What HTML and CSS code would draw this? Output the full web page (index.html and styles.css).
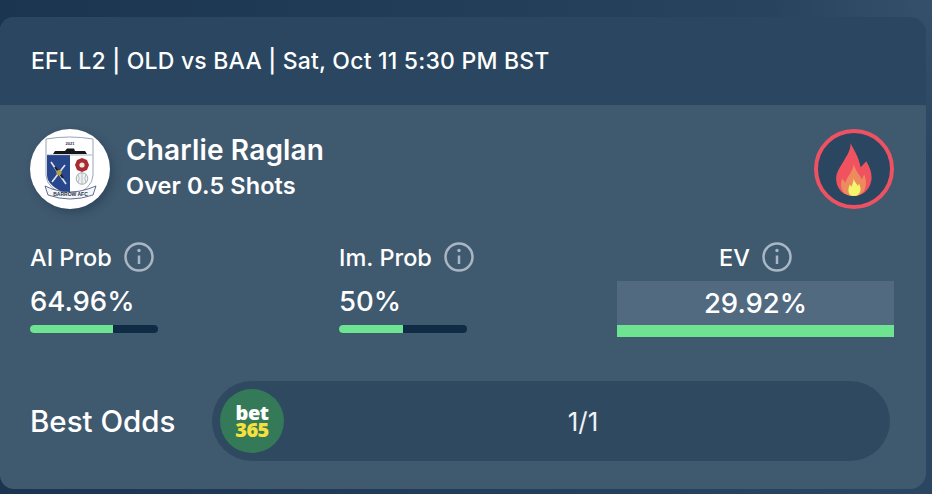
FILE: index.html
```html
<!DOCTYPE html>
<html lang="en">
<head>
<meta charset="utf-8">
<title>Best Odds</title>
<link rel="stylesheet" href="styles.css">
</head>
<body>
<main class="card">
  <header class="card-head">EFL L2 | OLD vs BAA | Sat, Oct 11 5:30 PM BST</header>
  <div class="card-body">
    <section class="player">
      <div class="crest">
        <svg viewBox="0 0 80 80" width="80" height="80">
          <circle cx="40" cy="40" r="40" fill="#fff"/>
          <path d="M16 10 Q40 6 63 10 L63 46 Q63 60 40 68 Q16 60 16 46 Z" fill="#fff" stroke="#98a4b6" stroke-width="1"/>
          <path d="M17 26 H40 V66 Q17 58 17 46 Z" fill="#27468c"/>
          <path d="M23 25 L25 22 H35 L37 19.500 H44 L45 22 H55 L57 25 Z" fill="#15161a"/>
          <path d="M17 26 H62" stroke="#707c90" stroke-width=".6"/>
          <path d="M21 33 L36 55" stroke="#dfe4ea" stroke-width="1.600"/>
          <path d="M35 36 L22 53" stroke="#dfe4ea" stroke-width="1.600"/>
          <path d="M25 38 L33 49" stroke="#1a1c20" stroke-width="2"/>
          <circle cx="29" cy="43.500" r="2.600" fill="#b9a23c"/>
          <path d="M52 29 L57 31 L59 36 L57 41 L52 43 L47 41 L45 36 L47 31 Z" fill="#a82a34"/>
          <circle cx="52" cy="36" r="2.600" fill="#f3e6da"/>
          <circle cx="52" cy="49.500" r="5.800" fill="#eef1f2" stroke="#7f8c90" stroke-width=".7"/>
          <path d="M52 44 V55 M48 45.500 Q50.500 49.500 48 53.500 M56 45.500 Q53.500 49.500 56 53.500" stroke="#7f8c90" stroke-width=".5" fill="none"/>
          <path d="M15 57 L22 60 Q40 66 58 60 L66 57 L63 66 Q40 74 18 66 Z" fill="#f4f6f8" stroke="#3a4a78" stroke-width=".8"/>
          <text x="40.500" y="67" class="crest-text">BARROW AFC</text>
          <text x="40" y="15.500" class="crest-text crest-year">2021</text>
        </svg>
      </div>
      <div class="who">
        <div class="name">Charlie Raglan</div>
        <div class="market">Over 0.5 Shots</div>
      </div>
      <div class="fire">
        <svg viewBox="107 65 108 160" width="36" height="53">
          <path d="M150 65 C160 85 175 105 181 138 L198 120 C210 140 217 160 213 180 C207 210 185 225 160 225 C130 225 107 205 107 172 C107 150 125 130 135 110 C145 95 152 80 150 65 Z" fill="#f0535f"/>
          <path d="M160 128 C165 150 178 160 184 175 L192 160 C202 185 200 225 160 225 C130 225 115 205 125 172 L135 185 C140 165 160 150 160 128 Z" fill="#ee8b5e"/>
          <path d="M160 172 C163 185 172 190 172 195 L176 188 C186 205 180 225 160 225 C145 225 140 210 148 190 L153 197 C156 190 160 180 160 172 Z" fill="#f4f56c"/>
        </svg>
      </div>
    </section>

    <section class="metrics">
      <div class="metric">
        <div class="label">AI Prob <svg class="info" viewBox="0 0 30 30"><circle cx="15" cy="15" r="13.500"/><path d="M15 13.500 V22"/><circle class="dot" cx="15" cy="8.500" r="1.700"/></svg></div>
        <div class="value">64.96%</div>
        <div class="track"><div class="fill" style="width:64.96%"></div></div>
      </div>
      <div class="metric">
        <div class="label">Im. Prob <svg class="info" viewBox="0 0 30 30"><circle cx="15" cy="15" r="13.500"/><path d="M15 13.500 V22"/><circle class="dot" cx="15" cy="8.500" r="1.700"/></svg></div>
        <div class="value">50%</div>
        <div class="track"><div class="fill" style="width:50%"></div></div>
      </div>
      <div class="metric metric-ev">
        <div class="label">EV <svg class="info" viewBox="0 0 30 30"><circle cx="15" cy="15" r="13.500"/><path d="M15 13.500 V22"/><circle class="dot" cx="15" cy="8.500" r="1.700"/></svg></div>
        <div class="ev-box">29.92%</div>
      </div>
    </section>

    <section class="odds">
      <div class="odds-title">Best Odds</div>
      <div class="pill">
        <div class="book"><span class="book-top">bet</span><span class="book-bottom">365</span></div>
        <div class="price">1/1</div>
      </div>
    </section>
  </div>
</main>
</body>
</html>
```
FILE: styles.css
```css
* { box-sizing: border-box; }
html, body { margin: 0; height: 100%; }
body {
  width: 932px;
  height: 494px;
  overflow: hidden;
  padding: 17px 6px 5px 0;
  background:
    radial-gradient(circle at 100% 0, rgba(62, 90, 116, .5) 0, rgba(62, 90, 116, 0) 160px),
    linear-gradient(90deg, #1b3551 0%, #2a4660 100%);
  font-family: Inter, "Liberation Sans", sans-serif;
  color: #fff;
}
.card {
  height: 472px;
  border-radius: 14px 16px 16px 14px;
  background: #3f596f;
  overflow: hidden;
  display: flex;
  flex-direction: column;
}
.card-head {
  height: 88px;
  flex: none;
  display: flex;
  align-items: center;
  padding-left: 31px;
  background: #2a4660;
  font-size: 23px;
  font-weight: 500;
  letter-spacing: 0.2px;
}
.card-body {
  flex: 1;
  padding: 24px 32px 0 30px;
}
.player {
  display: flex;
  align-items: center;
  height: 80px;
}
.crest {
  width: 80px;
  height: 80px;
  border-radius: 50%;
  box-shadow: 3px 4px 8px rgba(20, 40, 60, .35);
}
.crest svg { display: block; }
.crest-text {
  font-family: "Liberation Sans", sans-serif;
  font-size: 5px;
  font-weight: 700;
  fill: #28324a;
  text-anchor: middle;
}
.crest-year { font-size: 4px; }
.who {
  margin: 0 0 4px 16px;
  flex: 1;
}
.name {
  font-size: 28px;
  font-weight: 600;
  line-height: 30px;
  letter-spacing: 0.15px;
}
.market {
  margin-top: 8px;
  font-size: 23.500px;
  font-weight: 600;
  line-height: 26px;
  letter-spacing: 0.1px;
}
.fire {
  width: 80px;
  height: 80px;
  border-radius: 50%;
  background: #2a4660;
  border: 4px solid #ed5262;
  display: flex;
  align-items: center;
  justify-content: center;
}
.fire svg { display: block; }
.metrics {
  display: grid;
  grid-template-columns: 309px 278px 277px;
  margin-top: 33px;
}
.label {
  display: flex;
  align-items: center;
  gap: 12px;
  height: 30px;
  font-size: 23.500px;
  font-weight: 500;
  white-space: nowrap;
}
.info {
  width: 30px;
  height: 30px;
  fill: none;
  stroke: #a9b6c4;
  stroke-width: 2.500;
}
.info .dot { fill: #a9b6c4; stroke: none; }
.value {
  margin-top: 9px;
  height: 40px;
  font-size: 27.500px;
  font-weight: 500;
  line-height: 40px;
}
.track {
  margin-top: 4px;
  width: 128px;
  height: 8px;
  border-radius: 4px;
  background: #0f2b46;
  overflow: hidden;
}
.fill {
  height: 100%;
  background: #6ee391;
}
.metric-ev .label { justify-content: center; }
.ev-box {
  margin-top: 9px;
  height: 56px;
  background: #526a80;
  border-bottom: 12px solid #6ee391;
  display: flex;
  align-items: center;
  justify-content: center;
  font-size: 27.500px;
  font-weight: 500;
}
.odds {
  display: flex;
  align-items: center;
  margin-top: 44px;
}
.odds-title {
  width: 182px;
  font-size: 29.500px;
  font-weight: 500;
  flex: none;
}
.pill {
  flex: none;
  width: 678px;
  height: 80px;
  border-radius: 40px;
  background: #2f4a60;
  display: flex;
  align-items: center;
  padding: 0 8px;
}
.book {
  width: 64px;
  height: 64px;
  flex: none;
  border-radius: 50%;
  background: #357a58;
  display: flex;
  flex-direction: column;
  align-items: center;
  justify-content: center;
  font-family: "Open Sans", "Liberation Sans", sans-serif;
  font-weight: 800;
  font-size: 20px;
  line-height: 17px;
  letter-spacing: -0.5px;
}
.book-bottom { color: #f6e13c; }
.price {
  flex: 1;
  text-align: center;
  font-size: 26px;
  font-weight: 400;
  color: #eef2f5;
}
```
